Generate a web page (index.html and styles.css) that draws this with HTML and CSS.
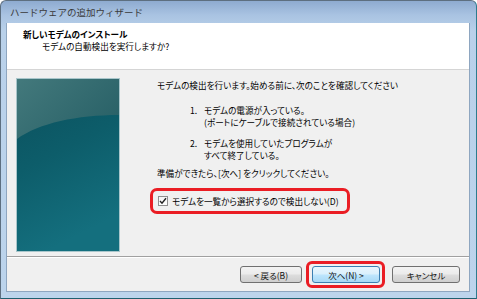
FILE: index.html
```html
<!DOCTYPE html>
<html lang="ja">
<head>
<meta charset="utf-8">
<link rel="stylesheet" href="styles.css">
</head>
<body>
<div class="window">
  <div class="titlebar">ハードウェアの追加ウィザード</div>
  <div class="client">
    <div class="header">
      <div class="h-title">新しいモデムのインストール</div>
      <div class="h-sub">モデムの自動検出を実行しますか?</div>
    </div>
    <div class="main">
      <div class="art">
        <svg width="102" height="172" viewBox="0 0 102 172">
          <defs>
            <linearGradient id="bg" x1="0" y1="0" x2="0.3" y2="1">
              <stop offset="0" stop-color="#0b4f5c"/>
              <stop offset="0.5" stop-color="#0d5d6a"/>
              <stop offset="1" stop-color="#146f7e"/>
            </linearGradient>
            <linearGradient id="gl" x1="0" y1="0" x2="1" y2="0.6">
              <stop offset="0" stop-color="#43797c"/>
              <stop offset="1" stop-color="#2a6268"/>
            </linearGradient>
          </defs>
          <rect width="102" height="172" fill="url(#bg)"/>
          <path d="M0,0 H102 V36 C60,36 22,44 0,60 Z" fill="url(#gl)"/>
        </svg>
      </div>
      <div class="content">
        <p class="lead">モデムの検出を行います。始める前に、次のことを確認してください</p>
        <ol class="steps">
          <li><span class="num">1.</span><span class="txt">モデムの電源が入っている。<br>(ポートにケーブルで接続されている場合)</span></li>
          <li><span class="num">2.</span><span class="txt">モデムを使用していたプログラムが<br>すべて終了している。</span></li>
        </ol>
        <p class="ready">準備ができたら、[次へ] をクリックしてください。</p>
        <div class="mark">
          <label class="check">
            <span class="box"><svg width="8" height="8" viewBox="0 0 8 8"><path d="M1,4 L3,6.2 L7,1.2" fill="none" stroke="#222" stroke-width="1.4"/></svg></span>
            <span>モデムを一覧から選択するので検出しない(D)</span>
          </label>
        </div>
      </div>
    </div>
    <div class="sep"></div>
    <div class="buttons">
      <div class="btn">&lt; 戻る(B)</div>
      <div class="btn default">次へ(N) &gt;<span class="ring"></span></div>
      <div class="btn cancel">キャンセル</div>
    </div>
  </div>
</div>
</body>
</html>
```
FILE: styles.css
```css
* { box-sizing: border-box; }
html, body { margin: 0; padding: 0; }
body {
  width: 477px;
  height: 299px;
  overflow: hidden;
  background: #ffffff;
  font-family: "Noto Sans CJK JP", "Noto Sans", sans-serif;
  font-feature-settings: "palt";
  color: #000;
}
.window {
  width: 477px;
  height: 299px;
  display: flex;
  flex-direction: column;
  border: 1px solid #5d6f80;
  border-right-color: #2d7c8e;
  border-bottom-color: #1f6070;
  border-radius: 6px 6px 0 0;
  background: linear-gradient(to bottom, #8eabd0 0px, #a9c3e2 14px, #b9d1ea 30px, #bcd4ec 100%);
  padding: 0 6px 6px 5px;
}
.titlebar {
  height: 22px;
  flex: none;
  display: flex;
  align-items: center;
  padding-left: 4px;
  font-size: 9.5px;
  font-feature-settings: normal;
  color: #3a3a3a;
}
.client {
  flex: 1;
  display: flex;
  flex-direction: column;
  background: #f0f0f0;
  border: 1px solid #8ea6c0;
  border-top: none;
}
.header {
  height: 47px;
  flex: none;
  background: #ffffff;
  border-bottom: 1px solid #d5d5d5;
  padding: 5px 0 0 16px;
  font-size: 8.6px;
  line-height: 12px;
}
.h-title { font-weight: bold; }
.h-sub { padding-left: 19px; }
.main {
  flex: 1;
  display: flex;
  padding: 8px 0 0 9px;
}
.art {
  width: 104px;
  height: 174px;
  border: 1px solid #a9c6cb;
  flex: none;
}
.art svg { display: block; }
.content {
  padding: 1px 0 0 37px;
  font-size: 8.6px;
  line-height: 12px;
}
.lead { margin: 0; }
.steps {
  list-style: none;
  margin: 13px 0 0 0;
  padding: 0 0 0 33px;
}
.steps li { display: flex; }
.steps li + li { margin-top: 9px; }
.num { width: 14px; flex: none; }
.ready { margin: 6px 0 0 0; }
.mark {
  display: inline-flex;
  margin: 9px 0 0 -7px;
  border: 3px solid #ea1d24;
  border-radius: 7px;
  height: 26px;
  width: 200px;
  align-items: center;
  padding-left: 5px;
}
.check { display: flex; align-items: center; gap: 4px; }
.box {
  width: 10px;
  height: 10px;
  border: 1px solid #8f8f8f;
  background: linear-gradient(#f4f4f4, #fdfdfd);
  display: flex;
  align-items: center;
  justify-content: center;
}
.sep {
  height: 2px;
  flex: none;
  border-top: 1px solid #a0a0a0;
  border-bottom: 1px solid #ffffff;
}
.buttons {
  height: 33px;
  flex: none;
  display: flex;
  align-items: center;
  justify-content: flex-end;
  padding-right: 9px;
  gap: 10px;
}
.btn {
  position: relative;
  width: 62px;
  height: 17px;
  border: 1px solid #707070;
  border-radius: 3px;
  background: linear-gradient(to bottom, #f3f3f3 0%, #ebebeb 48%, #dddddd 52%, #cfcfcf 100%);
  font-size: 8.5px;
  display: flex;
  align-items: center;
  justify-content: center;
  color: #111;
}
.btn.default {
  width: 68px;
  border-color: #3c7fb1;
  background: linear-gradient(to bottom, #eaf6fd 0%, #d9f0fc 48%, #bee6fd 52%, #a7d9f5 100%);
}
.btn.cancel { width: 68px; margin-left: 2px; }
.ring {
  position: absolute;
  left: -7px;
  top: -6px;
  right: -6px;
  bottom: -6px;
  border: 3px solid #ea1d24;
  border-radius: 6px;
}
```
